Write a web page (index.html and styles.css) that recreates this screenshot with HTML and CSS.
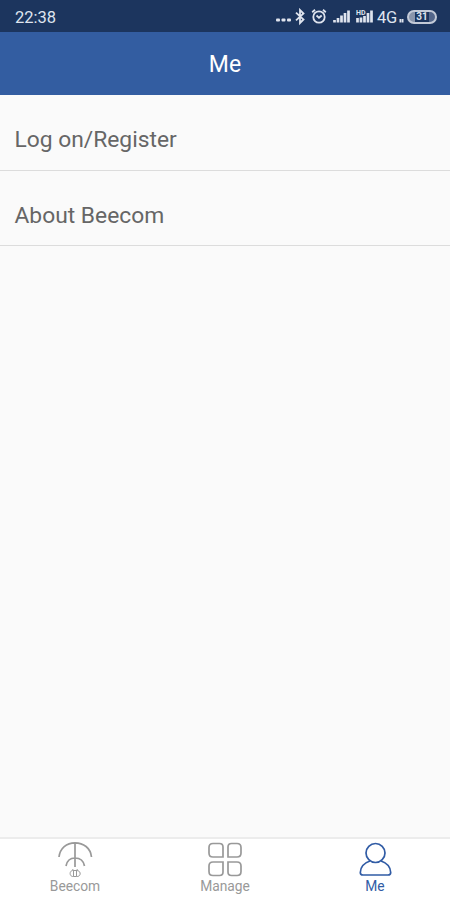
FILE: index.html
```html
<!DOCTYPE html>
<html lang="en">
    <head>
        <meta charset="UTF-8">
        <meta name="viewport" content="width=device-width, initial-scale=1.0">
        <title>Me</title>
        <link rel="stylesheet" href="styles.css">
    </head>
    <body>
        <div class="app">
            <div class="status">
                <span class="status__time">22:38</span>
                <div class="status__icons">
                    <svg class="icon-dots" width="16" height="18" viewBox="0 0 16 18">
                        <rect x="1" y="10.500" width="4" height="3" rx="1"/><rect x="6.500" y="10.500" width="4" height="3" rx="1"/><rect x="12" y="10.500" width="4" height="3" rx="1"/>
                    </svg>
                    <svg class="icon-bluetooth" width="10" height="18" viewBox="0 0 10 18">
                        <path d="M1 4.700L8.500 11.500 5 15V2L8.500 5.500 1 12.300"/>
                    </svg>
                    <svg class="icon-alarm" width="16" height="18" viewBox="0 0 16 18">
                        <circle cx="8" cy="9" r="5.700"/>
                        <path d="M1.200 4.200L4 1.800M14.800 4.200L12 1.800M5.500 7.500L8 9.800 10.700 7.500"/>
                    </svg>
                    <svg class="icon-signal" width="18" height="18" viewBox="0 0 18 18">
                        <path d="M1.500 14.500V12M5 14.500V10M8.500 14.500V7.500M12 14.500V5M15.500 14.500V2.500"/>
                    </svg>
                    <svg class="icon-signal icon-signal--hd" width="18" height="18" viewBox="0 0 18 18">
                        <path d="M1.500 14.500V10M5 14.500V9.500M8.500 14.500V8M12 14.500V5M15.500 14.500V2.500"/>
                        <text x="0" y="7">HD</text>
                    </svg>
                    <span class="status__network">4G</span>
                    <svg class="icon-data" width="5" height="18" viewBox="0 0 5 18">
                        <path d="M1.400 11V14.500M3.600 11V14.500"/>
                    </svg>
                    <span class="battery">31</span>
                </div>
            </div>
            <header class="header">Me</header>
            <main class="list">
                <div class="list__item">Log on/Register</div>
                <div class="list__item">About Beecom</div>
            </main>
            <nav class="tabs">
                <a class="tab">
                    <svg width="38" height="38" viewBox="0 0 38 38">
                        <path d="M3 17C4 8 10.500 2.800 19 2.800S34.500 8 35.500 17M10 26C11 20.500 14 18 19 18S27.500 20.500 28.500 26M19 3V27"/>
                        <path class="tab__bee" d="M17.500 30.500V36.500C13 37 13 30 17.500 30.500H20C25.500 30 25.500 37 20.500 36.500V30.500M17.500 36.500H20.500M17.500 30.500L16.500 29M20.500 30.500L21.500 29"/>
                    </svg>
                    <span>Beecom</span>
                </a>
                <a class="tab">
                    <svg width="38" height="38" viewBox="0 0 38 38">
                        <path d="M7 3.500H13.500Q17 3.500 17 7V17H7Q3 17 3 13V7.500Q3 3.500 7 3.500Z"/>
                        <path d="M25.500 3.500H31Q35 3.500 35 7.500V13Q35 17 31 17H22V7Q22 3.500 25.500 3.500Z"/>
                        <path d="M7 22H17V32Q17 35.500 13.500 35.500H7Q3 35.500 3 31.500V26Q3 22 7 22Z"/>
                        <path d="M22 22H31Q35 22 35 26V31.500Q35 35.500 31 35.500H25.500Q22 35.500 22 32Z"/>
                    </svg>
                    <span>Manage</span>
                </a>
                <a class="tab tab--active">
                    <svg width="38" height="38" viewBox="0 0 38 38">
                        <circle cx="19.500" cy="13" r="9.500"/>
                        <path d="M14 21C8 23 4.500 27 4.300 32.500Q4.300 35 7 35H32Q34.700 35 34.700 32.500C34.500 27 31 23 25 21"/>
                    </svg>
                    <span>Me</span>
                </a>
            </nav>
        </div>
    </body>
</html>
```
FILE: styles.css
```css
body {
    margin: 0;
    font-family: Roboto, "Liberation Sans", sans-serif;
    background-color: #fafafa;
}
.app {
    display: flex;
    flex-direction: column;
    height: 900px;
}
.status {
    display: flex;
    justify-content: space-between;
    align-items: center;
    box-sizing: border-box;
    height: 32px;
    padding: 2px 13px 0 15px;
    background-color: #1c355e;
    color: #dfe4ee;
}
.status__time {
    font-size: 16.5px;
}
.status__icons {
    display: flex;
    align-items: center;
}
.status__icons svg {
    fill: none;
    stroke: #dfe4ee;
    stroke-width: 1.8;
}
.status__icons .icon-dots {
    fill: #dfe4ee;
    stroke: none;
    margin-right: 4px;
}
.icon-bluetooth {
    margin-right: 6px;
}
.icon-alarm {
    margin-right: 6px;
}
.status__icons .icon-signal {
    stroke-width: 2.7;
    margin-right: 5px;
}
.status__icons .icon-signal--hd {
    margin-right: 3px;
}
.icon-signal text {
    fill: #dfe4ee;
    stroke: none;
    font-size: 7px;
    font-weight: 700;
}
.status__network {
    width: 22px;
    font-size: 16.5px;
    letter-spacing: -0.3px;
}
.icon-data {
    margin-right: 3px;
}
.battery {
    box-sizing: border-box;
    width: 30px;
    height: 14px;
    border: 2px solid #c3cad7;
    border-radius: 7px;
    background: linear-gradient(to right, #8995ab 6px, #1c355e 6px, #1c355e 20px, #53668a 20px);
    font-size: 10px;
    font-weight: 700;
    line-height: 10px;
    text-align: center;
}
.header {
    height: 63px;
    background-color: #335da1;
    color: #fff;
    font-size: 23px;
    line-height: 66px;
    text-align: center;
}
.list {
    flex: 1;
}
.list__item {
    box-sizing: border-box;
    height: 75.5px;
    padding-left: 14.5px;
    border-bottom: 1px solid #dcdcdc;
    color: #666;
    font-size: 22.8px;
    line-height: 89px;
}
.tabs {
    display: flex;
    box-sizing: border-box;
    height: 63px;
    border-top: 2px solid #ececec;
    background-color: #fff;
}
.tab {
    display: flex;
    flex: 1;
    flex-direction: column;
    align-items: center;
    padding-top: 1px;
    color: #999;
    font-size: 13.8px;
    line-height: 16px;
}
.tab svg {
    fill: none;
    stroke: currentColor;
    stroke-width: 1.7;
}
.tab .tab__bee {
    stroke-width: 1;
}
.tab--active {
    color: #315ca5;
}
```
